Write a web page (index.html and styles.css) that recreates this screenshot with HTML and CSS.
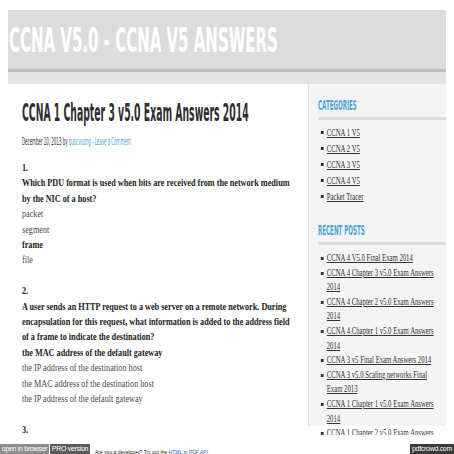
FILE: index.html
```html
<!DOCTYPE html>
<html>
<head>
<meta charset="utf-8">
<link rel="stylesheet" href="styles.css">
</head>
<body>
<div class="page">
  <header class="masthead">
    <div class="brand"><span class="cond site-title">CCNA V5.0 - CCNA V5 ANSWERS</span></div>
    <div class="rule"></div>
    <div class="navband"></div>
  </header>
  <div class="columns">
    <main class="main">
      <h1 class="post-title"><span class="cond">CCNA 1 Chapter 3 v5.0 Exam Answers 2014</span></h1>
      <div class="meta"><span class="cond">December 10, 2013 by <a class="blue">quocvuong</a><span class="blue"> - Leave a Comment</span></span></div>
      <div class="entry">
        <p><b>1.</b><br><b>Which PDU format is used when bits are received from the network medium by the NIC of a host?</b><br>packet<br>segment<br><b>frame</b><br>file</p>
        <p><b>2.</b><br><b>A user sends an HTTP request to a web server on a remote network. During encapsulation for this request, what information is added to the address field of a frame to indicate the destination?</b><br><b>the MAC address of the default gateway</b><br>the IP address of the destination host<br>the MAC address of the destination host<br>the IP address of the default gateway</p>
        <p><b>3.</b></p>
      </div>
    </main>
    <aside class="sidebar">
      <h3 class="widget-title"><span class="cond">CATEGORIES</span></h3>
      <div class="widget-bar"></div>
      <ul class="cats">
        <li><a>CCNA 1 V5</a></li>
        <li><a>CCNA 2 V5</a></li>
        <li><a>CCNA 3 V5</a></li>
        <li><a>CCNA 4 V5</a></li>
        <li><a>Packet Tracer</a></li>
      </ul>
      <h3 class="widget-title second"><span class="cond">RECENT POSTS</span></h3>
      <div class="widget-bar"></div>
      <ul class="posts">
        <li><a>CCNA 4 V5.0 Final Exam 2014</a></li>
        <li><a>CCNA 4 Chapter 3 v5.0 Exam Answers 2014</a></li>
        <li><a>CCNA 4 Chapter 2 v5.0 Exam Answers 2014</a></li>
        <li><a>CCNA 4 Chapter 1 v5.0 Exam Answers 2014</a></li>
        <li><a>CCNA 3 v5 Final Exam Answers 2014</a></li>
        <li><a>CCNA 3 v5.0 Scaling networks Final Exam 2013</a></li>
        <li><a>CCNA 1 Chapter 1 v5.0 Exam Answers 2014</a></li>
        <li><a>CCNA 1 Chapter 2 v5.0 Exam Answers 2014</a></li>
      </ul>
    </aside>
  </div>
</div>
<footer class="pdfbar">
  <span class="btn open">open in browser</span><span class="btn pro">PRO version</span>
  <span class="promo"><span class="promo-in">Are you a developer? Try out the <a>HTML to PDF API</a></span></span>
  <span class="spacer"></span>
  <span class="btn crowd">pdfcrowd.com</span>
</footer>
</body>
</html>
```
FILE: styles.css
```css
html, body { margin: 0; padding: 0; background: #fff; }
body { padding: 10px 8px 0 8px; width: 438px; }

.cond {
  display: inline-block;
  white-space: nowrap;
  transform-origin: left center;
  font-family: "DejaVu Sans Condensed", "DejaVu Sans", sans-serif;
}

.page { height: 425px; overflow: hidden; }

.masthead { background: #dcdcdc; }
.brand { padding: 13px 0 12px 1px; height: 34px; }
.site-title {
  font-size: 34px; line-height: 34px; color: #fff; font-weight: bold;
  transform: scaleX(0.49);
}
.rule { height: 3px; background: #bdbdbd; }
.navband { height: 12px; background: #e3e3e3; }

.columns { display: flex; height: 342px; }
.main { width: 286px; padding: 0 0 0 14px; flex: none; }
.post-title {
  margin: 18px 0 0 0; font-weight: bold;
  font-size: 24px; line-height: 23px; height: 23px; color: #2e2e2e;
}
.post-title .cond { transform: scaleX(0.43); }
.meta { margin-top: 11px; height: 12px; font-size: 10px; line-height: 12px; color: #333; }
.meta .cond { transform: scaleX(0.44); }
.blue { color: #4aa3d8; }

.entry {
  margin-top: 12px;
  font-family: "Liberation Serif", serif;
  font-size: 10.5px; line-height: 15.4px; color: #4a4a4a;
  width: 349px;
  transform: scaleX(0.78);
  transform-origin: left top;
}
.entry p { margin: 0 0 15.4px 0; }
.entry b { color: #222; }

.sidebar {
  flex: 1; background: #f4f4f4; border-left: 1px solid #dedede;
  padding: 14px 9px 0 9px;
}
.widget-title {
  margin: 0; font-weight: bold; font-size: 14px; line-height: 14px; height: 14px;
  color: #4aa3d8;
}
.widget-title .cond { transform: scaleX(0.44); }
.widget-title.second { margin-top: 18px; }
.widget-bar { height: 3px; background: #dcdcdc; margin-top: 5px; }

.sidebar ul {
  list-style: none; margin: 0; padding: 0 0 0 12.5px;
  font-family: "Liberation Serif", serif; font-size: 9.6px; color: #333;
  width: 156px;
  transform: scaleX(0.7);
  transform-origin: left top;
}
.sidebar li { position: relative; }
.sidebar li::before {
  content: ""; position: absolute; left: -8.5px; top: 6px; width: 4px; height: 3px; background: #333;
}
.sidebar a { color: #333; text-decoration: underline; }
.cats { margin-top: 5px !important; }
.cats li { line-height: 16px; }
.posts { margin-top: 6px !important; }
.posts li { line-height: 14.6px; }

.pdfbar {
  display: flex; align-items: center; margin: 9px -8px 0 -8px; height: 10px;
  font-family: "Liberation Sans", sans-serif;
}
.btn {
  height: 10px; line-height: 10px; font-size: 7px; color: #fff;
  white-space: nowrap; overflow: hidden; flex: none;
  text-align: center; letter-spacing: -0.3px;
}
.open { background: #8d8d8d; width: 49px; }
.pro { background: #5c5c5c; width: 40px; margin-left: 1px; }
.promo { margin-left: 5px; flex: none; width: 112px; }
.promo-in {
  display: inline-block; white-space: nowrap; font-size: 6px; color: #222;
  transform: scaleX(0.83); transform-origin: left center;
}
.promo a { color: #2b63c9; text-decoration: underline; }
.spacer { flex: 1; }
.crowd { background: #3a3a3a; width: 44px; }
```
